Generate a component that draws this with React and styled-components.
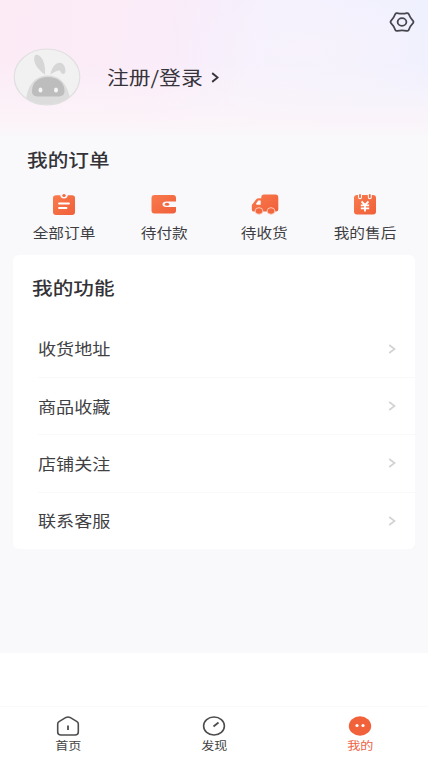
import { useState } from "react";
import styled, { createGlobalStyle } from "styled-components";

const orders = [
  { name: "全部订单", icon: <AllOrderIcon /> },
  { name: "待付款", icon: <WalletIcon /> },
  { name: "待收货", icon: <TruckIcon /> },
  { name: "我的售后", icon: <AfterSaleIcon /> },
];

const functions = ["收货地址", "商品收藏", "店铺关注", "联系客服"];

const tabs = [
  { name: "首页", icon: <HomeIcon /> },
  { name: "发现", icon: <DiscoverIcon /> },
  { name: "我的", icon: <MineIcon /> },
];

export default function App() {
  const [active, setActive] = useState("我的");

  return (
    <>
      <GlobalStyle />
      <Page>
        <Content>
          <Header>
            <SettingRow>
              <SettingIcon />
            </SettingRow>
            <UserRow>
              <Avatar />
              <LoginText>注册/登录</LoginText>
              <Arrow $width={8} $height={11} $color="#36343a" $stroke={1.8} />
            </UserRow>
          </Header>
          <OrderSection>
            <OrderTitle>我的订单</OrderTitle>
            <OrderList>
              {orders.map(({ name, icon }) => (
                <OrderItem key={name}>
                  {icon}
                  <OrderName>{name}</OrderName>
                </OrderItem>
              ))}
            </OrderList>
          </OrderSection>
          <Card>
            <CardTitle>我的功能</CardTitle>
            {functions.map((name) => (
              <Row key={name}>
                <RowName>{name}</RowName>
                <Arrow $width={8} $height={10} $color="#d2d2d2" $stroke={1.6} />
              </Row>
            ))}
          </Card>
        </Content>
        <TabBar>
          {tabs.map(({ name, icon }) => (
            <Tab
              key={name}
              $active={active === name}
              onClick={() => setActive(name)}
            >
              {icon}
              <TabName>{name}</TabName>
            </Tab>
          ))}
        </TabBar>
      </Page>
    </>
  );
}

function Arrow({ $width, $height, $color, $stroke }) {
  return (
    <svg width={$width} height={$height} viewBox="0 0 8 10" preserveAspectRatio="none" fill="none">
      <path d="M1.2 1 6.6 5 1.2 9" stroke={$color} strokeWidth={$stroke} />
    </svg>
  );
}

function SettingIcon() {
  return (
    <svg width="26" height="22" viewBox="0 0 26 22" fill="none" stroke="#47464e" strokeWidth="1.8">
      <path
        d="M8.2 2.1Q13 3.3 17.8 2.1Q19 1.9 19.7 3Q21.4 7.3 24 9.8Q24.9 11 24 12.2Q21.4 14.7 19.7 19Q19 20.1 17.8 19.9Q13 18.7 8.2 19.9Q7 20.1 6.3 19Q4.6 14.7 2 12.2Q1.1 11 2 9.8Q4.6 7.3 6.3 3Q7 1.9 8.2 2.1Z"
        strokeLinejoin="round"
      />
      <ellipse cx="13" cy="11" rx="4.4" ry="3.8" />
    </svg>
  );
}

function Avatar() {
  return (
    <svg width="68" height="58" viewBox="0 0 68 58">
      <defs>
        <clipPath id="avatar">
          <ellipse cx="34" cy="29" rx="32.5" ry="27.7" />
        </clipPath>
      </defs>
      <ellipse cx="34" cy="29" rx="32.8" ry="28" fill="#f2f1f2" stroke="#e0dfe0" strokeWidth="1.2" />
      <g clipPath="url(#avatar)">
        <path d="M13 51C15 37 22 27.5 35 27.5S54 37 57 50L50 59H18Z" fill="#dcdcdc" />
        <path d="M32 26.5C25 22 19.5 14 21.5 8.5C22 6.5 24 6 26 7.5C31 11 32.5 18 32 26.5Z" fill="#d6d6d6" />
        <path d="M37.5 26.5C39 18.5 43.5 14 48 15C51.5 16 53.5 22 52 25C50.5 27 48 26 47 22.5C43 22.5 41 24.5 37.5 26.5Z" fill="#d6d6d6" />
        <path d="M19 43C19 34 26 29 35 29S51.5 34 51.5 43C51.5 47 49 48.5 44 48.5H26C21 48.5 19 47 19 43Z" fill="#bdbdbd" />
        <ellipse cx="27.5" cy="42" rx="2" ry="2.6" fill="#f5f5f5" />
        <ellipse cx="43" cy="42" rx="2" ry="2.6" fill="#f5f5f5" />
      </g>
    </svg>
  );
}

function OrangeFill({ id }) {
  return (
    <defs>
      <linearGradient id={id} x1="0" y1="0" x2="1" y2="1">
        <stop offset="0" stopColor="#f97b4d" />
        <stop offset="1" stopColor="#f05f39" />
      </linearGradient>
    </defs>
  );
}

function AllOrderIcon() {
  return (
    <svg width="28" height="22" viewBox="0 0 28 22">
      <OrangeFill id="all" />
      <path
        d="M6 2.2H10.2Q10.8 5.5 14 5.5T17.8 2.2H22Q25 2.2 25 5V19Q25 22 22 22H6Q3 22 3 19V5Q3 2.2 6 2.2Z"
        fill="url(#all)"
      />
      <ellipse cx="14" cy="2.6" rx="1.7" ry="1.5" fill="#f4683f" />
      <path d="M9 10.5H19M9 15H16.5" stroke="#fff" strokeWidth="1.8" strokeLinecap="round" />
    </svg>
  );
}

function WalletIcon() {
  return (
    <svg width="28" height="22" viewBox="0 0 28 22">
      <OrangeFill id="wallet" />
      <path
        d="M4.5 2H23Q26 2 26 5V8.5H16.5Q12.5 8.5 12.5 11.2T16.5 14H26V17.5Q26 20.5 23 20.5H4.5Q1.5 20.5 1.5 17.5V5Q1.5 2 4.5 2Z"
        fill="url(#wallet)"
      />
      <ellipse cx="17" cy="11.2" rx="2.2" ry="1.5" fill="#f4683f" />
    </svg>
  );
}

function TruckIcon() {
  return (
    <svg width="28" height="22" viewBox="0 0 28 22">
      <OrangeFill id="truck" />
      <path
        d="M13 1.5H24.5Q27.3 1.5 27.3 4.5V16.5Q27.3 18.5 25 18.5H2.5Q.8 18.5 .8 16.5V12.5Q.8 11.3 2 10.5L5 6.5Q6 5.3 8 5.3H10.3V4Q10.3 1.5 13 1.5Z"
        fill="url(#truck)"
      />
      <path d="M5 10.8 7.3 7.5H9.7V11.7H5.6Z" fill="#fff" />
      <ellipse cx="8" cy="18" rx="3.9" ry="3.3" fill="#f4683f" stroke="#fbd3c6" strokeWidth=".9" />
      <ellipse cx="20" cy="18" rx="3.9" ry="3.3" fill="#f4683f" stroke="#fbd3c6" strokeWidth=".9" />
    </svg>
  );
}

function AfterSaleIcon() {
  return (
    <svg width="28" height="22" viewBox="0 0 28 22">
      <OrangeFill id="sale" />
      <rect x="3" y="2" width="22" height="19.5" rx="3" fill="url(#sale)" />
      <path d="M9 1V4.2M18.8 1V4.2" stroke="#f9f9fc" strokeWidth="4" strokeLinecap="round" />
      <path d="M9 2V4.2M18.8 2V4.2" stroke="#f4683f" strokeWidth="1.8" strokeLinecap="round" />
      <path d="M10.5 8.5 14 12 17.5 8.5M9.8 12.3H18.2M9.8 15.3H18.2M14 12V18.5" stroke="#fff" strokeWidth="1.8" fill="none" />
    </svg>
  );
}

function HomeIcon() {
  return (
    <svg width="24" height="20" viewBox="0 0 24 20" fill="none" stroke="#4d4d4d" strokeWidth="1.6">
      <path
        d="M10 1.4Q12 .6 14 1.4L21 5.6Q22.3 6.5 22.3 8V16Q22.3 19 19 19H5Q1.7 19 1.7 16V8Q1.7 6.5 3 5.6Z"
        strokeLinejoin="round"
      />
      <path d="M12 9.5V14" strokeWidth="1.8" />
    </svg>
  );
}

function DiscoverIcon() {
  return (
    <svg width="24" height="20" viewBox="0 0 24 20" fill="none" stroke="#4d4d4d" strokeWidth="1.6">
      <ellipse cx="12" cy="10" rx="10.4" ry="9" />
      <path d="M11.5 10.5 16.5 6.5" strokeWidth="1.8" />
    </svg>
  );
}

function MineIcon() {
  return (
    <svg width="24" height="20" viewBox="0 0 24 20">
      <ellipse cx="12" cy="10" rx="11.2" ry="9.7" fill="#f2623a" />
      <ellipse cx="9" cy="9.5" rx="1.6" ry="1.6" fill="#fff" />
      <ellipse cx="15" cy="9.5" rx="1.6" ry="1.6" fill="#fff" />
    </svg>
  );
}

const GlobalStyle = createGlobalStyle`
  * {
    box-sizing: border-box;
  }

  body {
    margin: 0;
    background-color: white;
    font-family: "Noto Sans CJK SC", sans-serif;
  }

  svg {
    display: block;
    flex-shrink: 0;
  }
`;

const Page = styled.div`
  display: flex;
  flex-direction: column;
  justify-content: space-between;
  height: 757px;
  overflow: hidden;
`;

const Content = styled.main`
  height: 653px;
  background-color: #f9f9fc;
`;

const Header = styled.header`
  height: 138px;
  background:
    linear-gradient(to bottom, rgba(253, 246, 249, 0) 45%, rgba(252, 245, 249, 0.85) 88%, #f9f8fb 100%),
    radial-gradient(ellipse 130px 60px at 310px 50px, rgba(248, 243, 252, 0.9), rgba(248, 243, 252, 0)),
    linear-gradient(100deg, #fcebf5 0%, #faecf9 38%, #f4f1fd 62%, #eff1fe 100%);
`;

const SettingRow = styled.div`
  display: flex;
  justify-content: flex-end;
  height: 48px;
  padding: 11px 13px 0 0;
`;

const UserRow = styled.div`
  display: flex;
  align-items: center;
  height: 58px;
  padding-left: 13px;
`;

/* wide glyphs, every text is stretched the same way */
const Text = styled.span`
  display: block;
  white-space: nowrap;
  transform: scaleX(1.16);
  transform-origin: left center;
`;

const LoginText = styled(Text)`
  width: 104px;
  margin-left: 26px;
  color: #36343a;
  font-size: 18.8px;
  line-height: 26px;
`;

const OrderSection = styled.section`
  height: 117px;
  padding-top: 8px;
`;

const OrderTitle = styled(Text)`
  margin-left: 27px;
  color: #333338;
  font-size: 17.8px;
  font-weight: 500;
  line-height: 26px;
`;

const OrderList = styled.div`
  display: grid;
  grid-template-columns: repeat(4, 1fr);
  padding: 21px 13px 0 14px;
`;

const OrderItem = styled.div`
  display: flex;
  flex-direction: column;
  align-items: center;
`;

const OrderName = styled(Text)`
  margin-top: 7px;
  color: #3e3e42;
  font-size: 13.5px;
  line-height: 20px;
  transform-origin: center;
`;

const Card = styled.section`
  height: 294px;
  margin: 0 13px;
  padding-top: 19px;
  border-radius: 6px;
  background-color: white;
`;

const CardTitle = styled(Text)`
  margin: 0 0 20px 19px;
  color: #333338;
  font-size: 17.8px;
  font-weight: 500;
  line-height: 26px;
`;

const Row = styled.div`
  display: flex;
  align-items: center;
  justify-content: space-between;
  height: 57.2px;
  margin-left: 25px;
  padding-right: 19px;

  & + & {
    border-top: 1px solid #f9f9fa;
  }
`;

const RowName = styled(Text)`
  padding-bottom: 1px;
  color: #414144;
  font-size: 15.6px;
  line-height: 24px;
`;

const TabBar = styled.nav`
  display: flex;
  justify-content: center;
  height: 51px;
  padding-top: 9px;
  border-top: 1px solid #f9f9f9;
`;

const Tab = styled.div`
  display: flex;
  flex-direction: column;
  align-items: center;
  flex: 0 0 146px;
  color: ${({ $active }) => ($active ? "#ee6444" : "#444444")};
  cursor: pointer;
`;

const TabName = styled(Text)`
  margin-top: 1px;
  font-size: 11.3px;
  line-height: 17px;
  transform-origin: center;
`;
